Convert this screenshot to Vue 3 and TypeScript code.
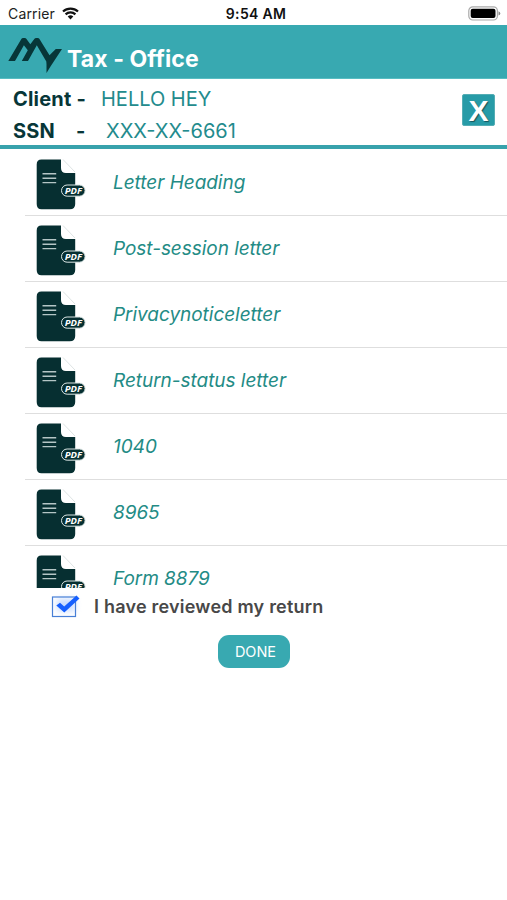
<script setup lang="ts">
interface Letter {
  title: string
}

const letters: Letter[] = [
  { title: 'Letter Heading' },
  { title: 'Post-session letter' },
  { title: 'Privacynoticeletter' },
  { title: 'Return-status letter' },
  { title: '1040' },
  { title: '8965' },
  { title: 'Form 8879' },
]
</script>

<template>
  <div class="screen">
    <div class="status">
      <div class="carrier">
        <span>Carrier</span>
        <svg class="wifi" width="17" height="13" viewBox="0 0 17 13">
          <path d="M1 4.5a11 11 0 0 1 15 0M3.6 7.4a7 7 0 0 1 9.8 0" fill="none" stroke="#111" stroke-width="2.2" />
          <path d="M8.5 12.4 5.7 9.5a4 4 0 0 1 5.6 0z" fill="#111" />
        </svg>
      </div>
      <span class="time">9:54 AM</span>
      <svg class="battery" width="33" height="15" viewBox="0 0 33 15">
        <rect x="0.8" y="0.8" width="28.6" height="13.2" rx="4" fill="#fff" stroke="#aaa" stroke-width="1.2" />
        <rect x="2.7" y="2.7" width="24.8" height="9.4" rx="2" fill="#000" />
        <path d="M30.5 5.2q1.8.7 1.8 2.2t-1.8 2.2z" fill="#888" />
      </svg>
    </div>

    <header class="header">
      <svg class="logo" width="54" height="37" viewBox="0 0 54 37">
        <path
          d="M0.3 24 13.5 1.8Q14 1 15 1h1.8q1 0 1.500.8L22.300 7.300 26.500 1.800Q27 1 28 1h1.800q1 0 1.500.8L41.500 18.300 47.800 12H54L42.500 29.500 38.500 36V27.300L38.300 24.500 28.800 8.300 20 24H13.800L19.800 13.300 15.900 8.300 7 24z"
          fill="#073638"
        />
      </svg>
      <h1 class="title">Tax - Office</h1>
    </header>

    <section class="client">
      <div class="fields">
        <div class="field">
          <span class="label name-label">Client -</span>
          <span class="value">HELLO HEY</span>
        </div>
        <div class="field">
          <span class="label ssn-label">SSN</span>
          <span class="label dash">-</span>
          <span class="value">XXX-XX-6661</span>
        </div>
      </div>
      <button class="close" type="button">X</button>
    </section>

    <ul class="list">
      <li v-for="letter in letters" :key="letter.title" class="row">
        <svg class="file" width="50" height="51" viewBox="0 0 50 51">
          <path d="M27 0.5 39 13" stroke="#d5dddd" stroke-width="0.8" />
          <path
            d="M5.5 0.5H25V9q0 5 5 5h9.200v31q0 5.300-5.500 5.300H5.500Q0.700 50.300 0.700 45V5.500Q0.700 0.500 5.500 0.500z"
            fill="#062f31"
          />
          <path d="M6.500 14.800h13.700M6.500 19.200h13.700M6.500 23.600h13.700" stroke="#b5c6c6" stroke-width="1.400" />
          <rect x="25.500" y="26" width="23.600" height="11.200" rx="5.600" fill="#062f31" stroke="#dce6e5" stroke-width="1" />
          <text x="37.300" y="34.900" class="pdf">PDF</text>
        </svg>
        <span class="letter">{{ letter.title }}</span>
      </li>
    </ul>

    <div class="review">
      <svg class="check" width="32" height="28" viewBox="0 0 32 28">
        <rect class="glow" x="7" y="7" width="18" height="12" />
        <rect x="2.500" y="5" width="23" height="19.500" fill="none" stroke="#477fd6" stroke-width="1.200" />
        <path d="M6.300 13.500 10 10.800l4.200 3.700L26.500 3.500l3 3L14.300 20.500z" fill="#155fff" />
      </svg>
      <span class="review-text">I have reviewed my return</span>
    </div>

    <div class="actions">
      <button class="done" type="button">DONE</button>
    </div>
  </div>
</template>

<style>
body {
  margin: 0;
  background: #fff;
}
</style>

<style scoped>
.screen {
  width: 507px;
  height: 900px;
  overflow: hidden;
  background: #fff;
  font-family: Inter, "Liberation Sans", sans-serif;
}
.status {
  box-sizing: border-box;
  height: 25px;
  display: grid;
  grid-template-columns: 1fr auto 1fr;
  align-items: center;
  padding: 2px 6px 0 8px;
  color: #222;
  font-size: 14px;
  line-height: 22px;
}
.carrier {
  display: flex;
  align-items: center;
  gap: 7px;
  letter-spacing: 0.15px;
}
.wifi {
  margin-top: -1px;
}
.time {
  padding-left: 3px;
  font-weight: 600;
  letter-spacing: 0.3px;
  color: #111;
}
.battery {
  justify-self: end;
  margin-top: -1px;
}
.header {
  box-sizing: border-box;
  height: 54px;
  display: flex;
  align-items: flex-start;
  padding: 12px 0 0 8px;
  background: #38a9b1;
  border-bottom: 1px solid #58bdc2;
}
.title {
  margin: 7px 0 0 5px;
  color: #fff;
  font-size: 23px;
  line-height: 30px;
  font-weight: 700;
  letter-spacing: 0.08px;
  white-space: nowrap;
}
.client {
  box-sizing: border-box;
  height: 70px;
  display: flex;
  justify-content: space-between;
  align-items: flex-start;
  padding: 3px 12px 0 13px;
  border-bottom: 4px solid #38a2ac;
}
.field {
  display: flex;
  height: 32px;
  line-height: 34px;
  font-size: 20px;
  white-space: nowrap;
}
.label {
  color: #073638;
  font-weight: 700;
  letter-spacing: 0.2px;
}
.name-label {
  width: 88px;
}
.ssn-label {
  width: 63px;
}
.dash {
  width: 30px;
}
.value {
  color: #238b8d;
}
.close {
  width: 33px;
  height: 32px;
  margin-top: 12px;
  padding: 0;
  border: 1px solid #54adb4;
  border-radius: 2px;
  background: #279ba7;
  color: #fff;
  font: 700 30px/31px "Liberation Sans", sans-serif;
  text-shadow: 1px 1px 1px #17545b;
}
.list {
  height: 439px;
  margin: 0;
  padding: 0 0 0 25px;
  overflow: hidden;
  list-style: none;
}
.row {
  box-sizing: border-box;
  height: 66px;
  display: flex;
  align-items: flex-start;
  padding: 9px 0 0 11px;
  border-bottom: 1px solid #dedede;
}
.row:first-child {
  height: 67px;
  padding-top: 10px;
}
.pdf {
  fill: #fff;
  font: italic 700 9.5px "Open Sans", sans-serif;
  text-anchor: middle;
}
.letter {
  margin: 14px 0 0 27px;
  color: #238b85;
  font-size: 19px;
  line-height: 19px;
  font-style: italic;
  letter-spacing: -0.04px;
}
.review {
  height: 38px;
  display: flex;
  align-items: flex-start;
  padding-left: 50px;
}
.check {
  margin-top: 4px;
  overflow: visible;
}
.glow {
  fill: #8db5ff;
  opacity: 0.5;
  filter: blur(3px);
}
.review-text {
  margin: 6px 0 0 12px;
  color: #484848;
  font-size: 18px;
  line-height: 26px;
  font-weight: 600;
  letter-spacing: 0.22px;
}
.actions {
  display: flex;
  padding: 9px 0 0 218px;
}
.done {
  width: 72px;
  height: 33px;
  padding: 0 0 0 3px;
  border: 0;
  border-radius: 11px;
  background: #38a9b1;
  color: #fff;
  font: 400 14.5px/33px Inter, sans-serif;
}
</style>
